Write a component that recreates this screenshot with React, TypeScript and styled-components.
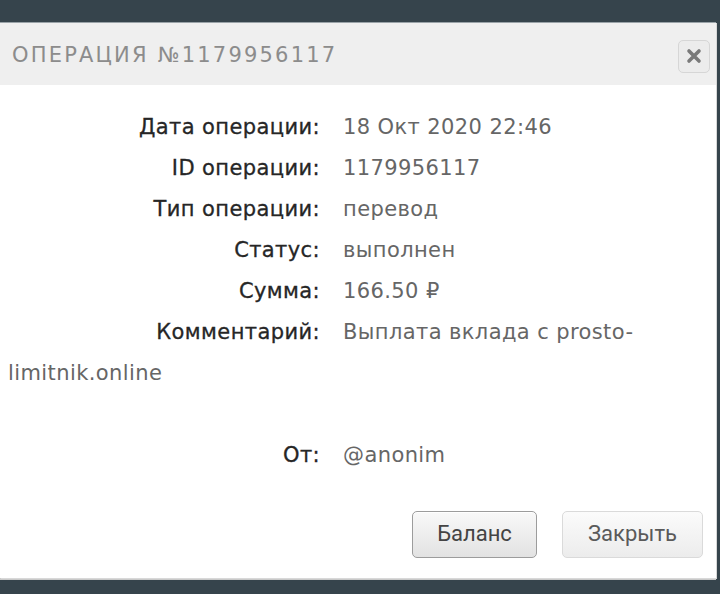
import { FC } from "react";
import styled, { createGlobalStyle } from "styled-components";

const GlobalStyle = createGlobalStyle`
  html, body {
    margin: 0;
    padding: 0;
    background: #36444c;
  }
`;

const rows: { label: string; value: string }[] = [
  { label: "Дата операции:", value: "18 Окт 2020 22:46" },
  { label: "ID операции:", value: "1179956117" },
  { label: "Тип операции:", value: "перевод" },
  { label: "Статус:", value: "выполнен" },
  { label: "Сумма:", value: "166.50 ₽" },
];

const App: FC = () => {
  return (
    <Page>
      <GlobalStyle />
      <Dialog>
        <Header>
          <Title>Операция №1179956117</Title>
          <CloseButton aria-label="close">
            <svg width="16" height="16" viewBox="0 0 16 16">
              <path
                d="M3 3 L13 13 M13 3 L3 13"
                stroke="#7a7a7a"
                strokeWidth="3.6"
                strokeLinecap="round"
              />
            </svg>
          </CloseButton>
        </Header>
        <Body>
          {rows.map((r) => (
            <Row key={r.label}>
              <Label>{r.label}</Label>
              <Value>{r.value}</Value>
            </Row>
          ))}
          <Row>
            <Label>Комментарий:</Label>
            <Value>
              Выплата вклада с prosto-
              <br />
              limitnik.online
            </Value>
          </Row>
          <Spacer />
          <Row>
            <Label>От:</Label>
            <Value>@anonim</Value>
          </Row>
        </Body>
        <Footer>
          <Button $primary>Баланс</Button>
          <Button>Закрыть</Button>
        </Footer>
      </Dialog>
    </Page>
  );
};

export default App;

const Page = styled.div`
  width: 720px;
  height: 594px;
  padding: 22px 4px 17px 0;
  box-sizing: border-box;
  background: #36444c;
`;

const Dialog = styled.div`
  height: 100%;
  display: flex;
  flex-direction: column;
  background: #fff;
  border-top: 1px solid #9aa3a8;
  box-shadow: 1px 1px 0 #d8d8d8, 0 2px 0 #c9c9c9;
`;

const Header = styled.div`
  height: 62px;
  display: flex;
  align-items: center;
  justify-content: space-between;
  padding: 0 6px 0 12px;
  background: #efefef;
`;

const Title = styled.div`
  font-family: "DejaVu Sans", sans-serif;
  font-size: 21px;
  letter-spacing: 2.2px;
  text-transform: uppercase;
  color: #8c8c8c;
  padding-top: 2px;
`;

const CloseButton = styled.button`
  width: 32px;
  height: 33px;
  margin-top: 4px;
  display: flex;
  align-items: center;
  justify-content: center;
  padding: 0;
  background: #ececec;
  border: 1px solid #d6d6d6;
  border-radius: 5px;
`;

const Body = styled.div`
  padding: 22px 8px 0 8px;
  font-family: "DejaVu Sans", sans-serif;
  font-size: 21px;
  letter-spacing: 0.4px;
  line-height: 41px;
`;

const Row = styled.div`
  color: #6a6a6a;
`;

const Label = styled.span`
  display: inline-block;
  width: 312px;
  text-align: right;
  color: #262626;
  -webkit-text-stroke: 0.3px #262626;
  margin-right: 23px;
`;

const Value = styled.span`
  color: #666;
`;

const Spacer = styled.div`
  height: 41px;
`;

const Footer = styled.div`
  margin-top: auto;
  display: flex;
  justify-content: flex-end;
  gap: 25px;
  padding: 0 13px 20px 0;
`;

const Button = styled.button<{ $primary?: boolean }>`
  height: 47px;
  padding: 0 20px 3px;
  min-width: ${(p) => (p.$primary ? "125px" : "141px")};
  font-family: Roboto, sans-serif;
  font-size: 22px;
  color: ${(p) => (p.$primary ? "#444" : "#5a5a5a")};
  border-radius: 5px;
  border: 1px solid ${(p) => (p.$primary ? "#9c9c9c" : "#dadada")};
  background: ${(p) =>
    p.$primary
      ? "linear-gradient(#f9f9f9, #e2e2e2)"
      : "linear-gradient(#fbfbfb, #ececec)"};
  box-shadow: ${(p) => (p.$primary ? "inset 0 1px 0 #fff" : "none")};
`;
